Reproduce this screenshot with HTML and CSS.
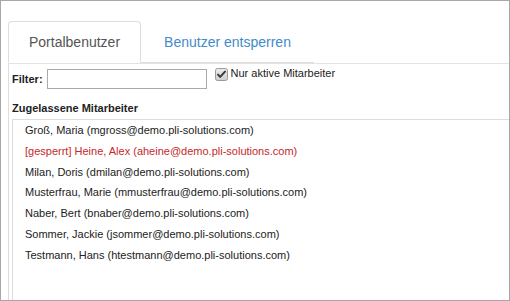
FILE: index.html
```html
<!DOCTYPE html>
<html lang="de">
<head>
<meta charset="utf-8">
<title>Portalbenutzer</title>
<link rel="stylesheet" href="styles.css">
</head>
<body>
<div class="frame">
  <ul class="tabs">
    <li class="tab active">Portalbenutzer</li>
    <li class="tab">Benutzer entsperren</li>
  </ul>
  <div class="pane">
    <div class="filter-row">
      <label class="filter-label" for="filter">Filter:</label>
      <input class="filter-input" id="filter" type="text">
      <span class="check-group">
        <span class="checkbox">
          <svg width="13" height="13" viewBox="0 0 13 13">
            <defs>
              <linearGradient id="cbg" x1="0" y1="0" x2="0" y2="1">
                <stop offset="0" stop-color="#ededed"/>
                <stop offset="1" stop-color="#cfcfcf"/>
              </linearGradient>
            </defs>
            <rect x="0.5" y="0.5" width="12" height="12" rx="2" fill="url(#cbg)" stroke="#9a9a9a"/>
            <path d="M3 6.6 L5.2 8.9 L10 3.6" fill="none" stroke="#3a3a3a" stroke-width="2" stroke-linecap="round" stroke-linejoin="round"/>
          </svg>
        </span>
        <span class="check-label">Nur aktive Mitarbeiter</span>
      </span>
    </div>
    <div class="section-title">Zugelassene Mitarbeiter</div>
    <ul class="list">
      <li>Groß, Maria (mgross@demo.pli-solutions.com)</li>
      <li class="locked">[gesperrt] Heine, Alex (aheine@demo.pli-solutions.com)</li>
      <li>Milan, Doris (dmilan@demo.pli-solutions.com)</li>
      <li>Musterfrau, Marie (mmusterfrau@demo.pli-solutions.com)</li>
      <li>Naber, Bert (bnaber@demo.pli-solutions.com)</li>
      <li>Sommer, Jackie (jsommer@demo.pli-solutions.com)</li>
      <li>Testmann, Hans (htestmann@demo.pli-solutions.com)</li>
    </ul>
  </div>
</div>
</body>
</html>
```

FILE: styles.css
```css
html, body {
  margin: 0;
  padding: 0;
  background: #fff;
}

.frame {
  box-sizing: border-box;
  height: 100vh;
  border: 1px solid #a8a8a8;
  padding: 20px 0 0 7px;
  display: flex;
  flex-direction: column;
  overflow: hidden;
  font-family: "Liberation Sans", Arial, sans-serif;
  color: #222;
}

.tabs {
  display: flex;
  align-self: flex-start;
  margin: 0;
  padding: 0;
  list-style: none;
  border-bottom: 1px solid #ddd;
}

.tab {
  margin: 0 2px -1px 0;
  padding: 10px 20px;
  border: 1px solid transparent;
  border-radius: 4px 4px 0 0;
  font-size: 14px;
  line-height: 20px;
  color: #428bca;
}

.tab.active {
  color: #555;
  background: #fff;
  border-color: #ddd;
  border-bottom-color: transparent;
}

.pane {
  flex: 1;
  display: flex;
  flex-direction: column;
  border-left: 1px solid #ddd;
  border-top: 1px solid #e3e3e3;
  padding: 5px 0 0 3px;
  font-size: 11px;
  line-height: 13px;
}

.filter-row {
  display: flex;
  align-items: center;
  height: 20px;
}

.filter-label {
  font-weight: bold;
  margin-right: 4px;
}

.filter-input {
  box-sizing: border-box;
  width: 160px;
  height: 20px;
  margin: 0;
  padding: 1px 3px;
  border: 1px solid #a9a9a9;
  border-radius: 0;
  font: inherit;
}

.check-group {
  display: flex;
  align-items: flex-start;
  align-self: flex-start;
  margin: -2px 0 0 8px;
}

.checkbox {
  display: block;
  width: 13px;
  height: 13px;
  margin-top: 1px;
}

.checkbox svg {
  display: block;
}

.check-label {
  margin-left: 3px;
}

.section-title {
  font-weight: bold;
  margin: 13px 0 4px;
}

.list {
  flex: 1;
  margin: 0;
  padding: 0 0 0 12px;
  list-style: none;
  border-left: 1px solid #ddd;
  border-top: 1px solid #ddd;
}

.list li {
  line-height: 20.8px;
  white-space: nowrap;
}

.list li.locked {
  color: #c62828;
}
```
